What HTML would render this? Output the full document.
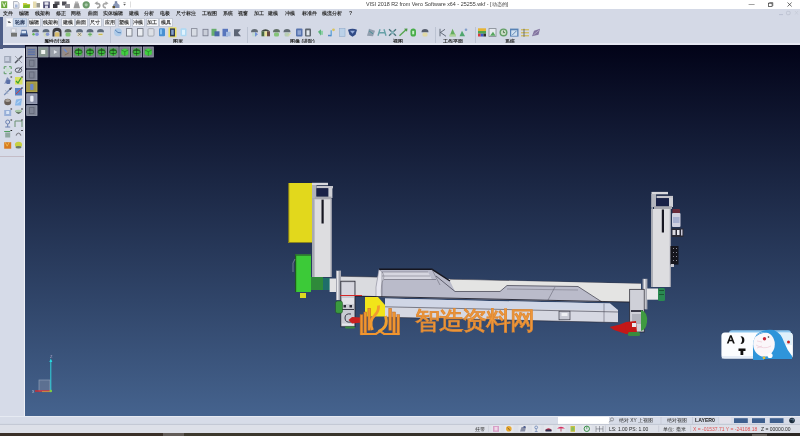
<!DOCTYPE html>
<html><head><meta charset="utf-8">
<style>
*{margin:0;padding:0;box-sizing:border-box}
html,body{width:800px;height:436px;overflow:hidden;background:#d4d9e6;font-family:"Liberation Sans",sans-serif}
.a{position:absolute}
#title{left:0;top:0;width:800px;height:9px;background:#fff}
#ttxt{left:0;top:1px;width:874px;text-align:center;font-size:5.4px;line-height:7px;color:#3a3a3a;white-space:nowrap}
#menu{left:0;top:9px;width:800px;height:8px;background:#d4d9e6}
.m{position:absolute;top:9.5px;font-size:5.2px;line-height:7px;color:#303030;font-weight:bold;white-space:nowrap}
.tab{position:absolute;top:17.8px;height:8.6px;background:#f6f7fa;border:0.5px solid #c4cad6;font-size:5px;line-height:7px;color:#3a3a3a;font-weight:bold;text-align:center;white-space:nowrap}
.gl{position:absolute;top:38px;font-size:5px;line-height:6px;color:#2a2a2a;font-weight:bold;white-space:nowrap}
.sep{position:absolute;top:27px;width:1px;height:17px;background:#bcc3d2}
#vp{left:25px;top:45px;width:775px;height:371px;background:linear-gradient(to bottom,#020318 0%,#45638e 100%)}
#lp{left:0;top:48.5px;width:25px;height:367.5px;background:#d6dbe8}
#st1{left:0;top:416px;width:800px;height:8.5px;background:#d7dce8;border-top:0.6px solid #e6eaf2}
#st2{left:0;top:424.5px;width:800px;height:8px;background:#dde0e8}
#bot{left:0;top:432.5px;width:800px;height:3.5px;background:linear-gradient(to right,#3a3028 0,#3a3028 163px,#625c58 163px,#625c58 184px,#3e3a2e 184px,#36322a 400px,#2c2824 800px)}
.s{position:absolute;font-size:5px;line-height:7px;white-space:nowrap;color:#222}
.ic{position:absolute;width:8px;height:8px}
.m,.tab,.gl,.s,#ttxt,#wm{will-change:transform}
</style></head><body>
<div id="title" class="a"></div>
<div id="ttxt" class="a">VISI 2018 R2 from Vero Software x64 - 25255.wkf - [动态的]</div>

<div id="menu" class="a"></div>
<div class="m" style="left:3px">文件</div>
<div class="m" style="left:19px">编辑</div>
<div class="m" style="left:35px">线架构</div>
<div class="m" style="left:55.5px">修正</div>
<div class="m" style="left:71px">网格</div>
<div class="m" style="left:87.5px">曲面</div>
<div class="m" style="left:102.5px">实体编辑</div>
<div class="m" style="left:129px">建模</div>
<div class="m" style="left:144px">分析</div>
<div class="m" style="left:160px">电极</div>
<div class="m" style="left:176px">尺寸标注</div>
<div class="m" style="left:202px">工程图</div>
<div class="m" style="left:223px">系统</div>
<div class="m" style="left:238px">视窗</div>
<div class="m" style="left:254px">加工</div>
<div class="m" style="left:268px">建模</div>
<div class="m" style="left:285px">冲模</div>
<div class="m" style="left:302px">标准件</div>
<div class="m" style="left:322px">模流分析</div>
<div class="m" style="left:349px">?</div>

<div class="tab" style="left:5.5px;width:6.5px;border-color:#e6e8ee"><div style="position:absolute;left:1.6px;top:3.2px;width:0;height:0;border-left:1.4px solid transparent;border-right:1.4px solid transparent;border-top:1.6px solid #111"></div></div>
<div class="tab" style="left:12.5px;width:13.5px;background:#cddbee;border-color:#b4c6de;color:#1e2e50">轮廓</div>
<div class="tab" style="left:27.5px;width:12.5px">编辑</div>
<div class="tab" style="left:42px;width:17px">线架构</div>
<div class="tab" style="left:60.5px;width:13.5px">建模</div>
<div class="tab" style="left:75px;width:12.5px">曲面</div>
<div class="tab" style="left:89px;width:12.5px">尺寸</div>
<div class="tab" style="left:102.5px;width:13px">应用</div>
<div class="tab" style="left:117.5px;width:12.5px">塑模</div>
<div class="tab" style="left:132px;width:12.5px">冲模</div>
<div class="tab" style="left:145.5px;width:12.5px">加工</div>
<div class="tab" style="left:159px;width:14px">模具</div>

<div class="gl" style="left:44px">属性/过滤器</div>
<div class="gl" style="left:172.5px">图形</div>
<div class="gl" style="left:290px">图像 (进阶)</div>
<div class="gl" style="left:393px">视图</div>
<div class="gl" style="left:443px">工作平面</div>
<div class="gl" style="left:505px">系统</div>
<div class="sep" style="left:110px"></div>
<div class="sep" style="left:247px"></div>
<div class="sep" style="left:435px"></div>
<div class="sep" style="left:475px"></div>


<svg class="a" style="left:0;top:0" width="800" height="48" viewBox="0 0 800 48">
<!-- quick access -->
<rect x="1.2" y="1.3" width="6" height="6.8" fill="#6aa83c"/>
<path d="M2.6 2.5 L4.2 6.8 L5.8 2.5" stroke="#e8f4d8" stroke-width="1" fill="none"/>
<path d="M13.5 1.5 H17.3 L19 3.2 V8.2 H13.5Z" fill="#eef0f6" stroke="#8a90a0" stroke-width="0.6"/>
<rect x="15" y="4.5" width="2.6" height="3" fill="#a8b8d8"/>
<path d="M23 3 H26.5 L27.5 4 H30 V8 H23Z" fill="#c8cc40"/>
<path d="M23.8 4.8 H30.3 L29 8 H23Z" fill="#7ab828"/>
<rect x="33" y="1.5" width="3.5" height="6.5" fill="#e6dcb0"/>
<rect x="36.5" y="3" width="3.5" height="4.5" fill="#9a9a90"/>
<rect x="43.2" y="1.6" width="6.6" height="6.6" fill="#4a4a72"/>
<rect x="44.5" y="2.2" width="4" height="2.6" fill="#e8e8f0"/>
<rect x="45" y="5.6" width="3" height="2.6" fill="#d8d8e8"/>
<rect x="54.5" y="1.5" width="5" height="3.5" fill="#5a5a60"/>
<rect x="53" y="4" width="4.5" height="4" fill="#3a3a40"/>
<rect x="62" y="1.5" width="4.5" height="4" fill="#505058"/>
<rect x="65" y="4" width="5" height="4" fill="#8a8a90"/>
<path d="M73.5 8.2 L74.8 3 H78.5 L80 8.2Z" fill="#9a9a9a"/>
<rect x="75" y="1.5" width="3.2" height="2" fill="#b8b8b8"/>
<circle cx="86.2" cy="4.8" r="3.6" fill="#6a9a6a"/>
<circle cx="86.2" cy="4.8" r="1.6" fill="#a8c8a8"/>
<path d="M96.5 3.2 Q99.8 3.2 99.8 5.6 Q99.8 7.8 97 7.8" stroke="#a0a0a0" stroke-width="1.5" fill="none"/>
<path d="M97.5 1.2 L94.5 3.2 L97.5 5.2Z" fill="#a0a0a0"/>
<path d="M106.5 3.2 Q103.2 3.2 103.2 5.6 Q103.2 7.8 106 7.8" stroke="#a8a8a8" stroke-width="1.5" fill="none"/>
<path d="M105.5 1.2 L108.5 3.2 L105.5 5.2Z" fill="#a8a8a8"/>
<path d="M113 5 L116 2 L119.5 5 V8 H113Z" fill="#8a98b8"/>
<rect x="114.8" y="1.2" width="2.4" height="2" fill="#7a88a8"/>
<rect x="112.5" y="6" width="2.5" height="2.2" fill="#5a5030"/>
<rect x="123.4" y="2.6" width="2.2" height="0.5" fill="#444"/>
<path d="M123.3 4.2 H125.8 L124.55 5.6Z" fill="#222"/>
<line x1="130.5" y1="1.5" x2="130.5" y2="7.5" stroke="#c8c8c8" stroke-width="0.6"/>
<!-- window controls -->
<line x1="748.6" y1="4.5" x2="754.6" y2="4.5" stroke="#444" stroke-width="0.5"/>
<rect x="768.5" y="3.2" width="3.6" height="3.4" fill="none" stroke="#333" stroke-width="0.7"/>
<path d="M769.3 2.6 H772.8 V6" stroke="#333" stroke-width="0.6" fill="none"/>
<path d="M787.5 2.5 L791.7 6.5 M791.7 2.5 L787.5 6.5" stroke="#333" stroke-width="0.7"/>
<!-- MDI controls -->
<line x1="779" y1="14.6" x2="783" y2="14.6" stroke="#a0a6bc" stroke-width="0.5"/>
<rect x="786.5" y="11.3" width="3.6" height="3.4" rx="1" fill="none" stroke="#b4b8c8" stroke-width="0.6"/>
<path d="M795 11 L798 14.5 M798 11 L795 14.5" stroke="#c0c4d2" stroke-width="0.5"/>
<!-- tab dropdown -->
<path d="M7.6 21.4 H10.2 L8.9 22.9Z" fill="#111"/>
</svg>
<div class="a" style="left:0;top:17px;width:3.4px;height:31.5px;background:#4e5e88"></div>
<div class="a" style="left:0;top:44.6px;width:25px;height:3.9px;background:#4e5b80"></div>
<svg class="a" style="left:0;top:0;filter:blur(0.3px);opacity:0.9" width="800" height="48" viewBox="0 0 800 48">
<rect x="10.5" y="28.3" width="6.5" height="5" fill="#c8ccd6"/><rect x="11" y="32.8" width="6" height="3.8" fill="#6a6a66"/><rect x="12" y="29.3" width="3" height="2.5" fill="#f0f0f4"/>
<path d="M20 36.3 L21.5 29.8 H26.5 L28 36.3Z" fill="#3a5a90"/><rect x="21.5" y="30.8" width="4.5" height="2.5" fill="#d8e4f4"/><rect x="20.2" y="34.8" width="7.6" height="1.5" fill="#2a3a68"/>
<path d="M32.0 32.300000000000004 A3.5 3.2 0 0 1 39.0 32.300000000000004Z" fill="#3a4a5c" opacity="0.85"/>
<rect x="33.0" y="32.6" width="5" height="3.8" rx="1.5" fill="#c8d8e0" opacity="0.7"/><circle cx="37" cy="34.3" r="1.8" fill="#7a8ad8"/><circle cx="33.5" cy="34.3" r="1.2" fill="#58b048"/>
<path d="M42.5 32.300000000000004 A3.5 3.2 0 0 1 49.5 32.300000000000004Z" fill="#3a4a5c" opacity="0.85"/>
<rect x="43.5" y="32.6" width="5" height="3.8" rx="1.5" fill="#d0dca0" opacity="0.7"/><circle cx="47.5" cy="34.3" r="1.8" fill="#8090d0"/>
<path d="M52.5 36.6 V31.8 Q52.5 27.8 57 27.8 Q61.5 27.8 61.5 31.8 V36.6 H59.5 V32.3 Q57 29.8 54.5 32.3 V36.6Z" fill="#2a2a30"/><rect x="54.8" y="32.3" width="4.5" height="4.3" fill="#d8b860"/>
<path d="M64.5 32.300000000000004 A3.5 3.2 0 0 1 71.5 32.300000000000004Z" fill="#3a4a3c" opacity="0.85"/>
<rect x="65.5" y="32.6" width="5" height="3.8" rx="1.5" fill="#58b838" opacity="0.7"/>
<path d="M76.0 32.300000000000004 A3.5 3.2 0 0 1 83.0 32.300000000000004Z" fill="#3a4a5c" opacity="0.85"/>
<rect x="77.0" y="32.6" width="5" height="3.8" rx="1.5" fill="#e8e0b0" opacity="0.7"/><path d="M78 32.8 L81 35.8 M81 32.8 L78 35.8" stroke="#444" stroke-width="0.6"/>
<path d="M86.5 32.300000000000004 A3.5 3.2 0 0 1 93.5 32.300000000000004Z" fill="#3a4a5c" opacity="0.85"/>
<rect x="87.5" y="32.6" width="5" height="3.8" rx="1.5" fill="#b8d8a8" opacity="0.7"/><path d="M90 32.3 V36.3 M88 34.3 H92" stroke="#40a040" stroke-width="0.8"/>
<path d="M97.0 32.300000000000004 A3.5 3.2 0 0 1 104.0 32.300000000000004Z" fill="#3a4a5c" opacity="0.85"/>
<rect x="98.0" y="32.6" width="5" height="3.8" rx="1.5" fill="#e6e4c8" opacity="0.7"/><rect x="98.5" y="33.8" width="4" height="1" fill="#c8b020"/>
<circle cx="118" cy="32.3" r="4" fill="#a8c8e8"/><path d="M115 29.8 Q118 33.8 121 32.8" stroke="#4a78b0" stroke-width="1" fill="none"/>
<rect x="126.5" y="28.6" width="5.5" height="7.5" fill="#eef0f4" stroke="#606470" stroke-width="0.8"/>
<rect x="137.5" y="28.6" width="5.5" height="7.5" fill="#eef0f4" stroke="#606470" stroke-width="0.8"/>
<rect x="148" y="28.6" width="6" height="7.5" rx="1" fill="#dde0e6" stroke="#8a8e98" stroke-width="0.7"/>
<rect x="159" y="28.3" width="6" height="8" rx="1" fill="#3a88d0"/><rect x="160" y="29.3" width="2" height="5" fill="#80c0f0"/>
<rect x="168.5" y="27.3" width="8" height="10" fill="#f0e050"/><rect x="170" y="28.400000000000002" width="5" height="8" fill="#1e2a40"/><rect x="171.2" y="29.8" width="2.5" height="5" fill="#7a98c8"/>
<rect x="180.5" y="28.3" width="6" height="8" rx="1" fill="#a8d8f4"/><rect x="182" y="29.8" width="3" height="5" fill="#e0f4ff"/>
<rect x="191.5" y="28.6" width="5.5" height="7.5" fill="#d8dce4" stroke="#7a7e8c" stroke-width="0.8"/>
<rect x="203" y="29.3" width="5" height="6.5" fill="#c8ccd8" stroke="#6a6e80" stroke-width="0.8"/>
<rect x="211.5" y="28.8" width="5" height="7" fill="#5aa860"/><rect x="214.5" y="31.3" width="5" height="5" fill="#3a5aa0"/>
<rect x="222.5" y="28.8" width="5.5" height="7.5" fill="#4a6ab8"/><rect x="226" y="31.8" width="4.5" height="4.5" fill="#a0b8e0"/>
<path d="M234 29.3 H241 L238 32.8 L241 36.3 H234Z" fill="#505868"/>
<path d="M251.0 32.300000000000004 A3.5 3.2 0 0 1 258.0 32.300000000000004Z" fill="#404a50" opacity="0.85"/>
<rect x="252.0" y="32.6" width="5" height="3.8" rx="1.5" fill="#b8d8c8" opacity="0.7"/><path d="M255 31.8 L258 34.3 L255 36.8 Z" fill="#6a8ad8"/>
<path d="M261 31.3 Q265.5 27.3 270 31.3Z" fill="#303830"/><rect x="261.5" y="31.3" width="3" height="5" fill="#3a5a30"/><rect x="264.5" y="31.3" width="2.5" height="5" fill="#e8e090"/><rect x="267" y="31.3" width="3" height="5" fill="#5a3a30"/>
<path d="M273.0 32.300000000000004 A3.5 3.2 0 0 1 280.0 32.300000000000004Z" fill="#405040" opacity="0.85"/>
<rect x="274.0" y="32.6" width="5" height="3.8" rx="1.5" fill="#58b838" opacity="0.7"/>
<path d="M283.5 32.300000000000004 A3.5 3.2 0 0 1 290.5 32.300000000000004Z" fill="#404a50" opacity="0.85"/>
<rect x="284.5" y="32.6" width="5" height="3.8" rx="1.5" fill="#a8c898" opacity="0.7"/><path d="M288 35.8 L291 32.8" stroke="#e0d890" stroke-width="1"/>
<rect x="296" y="28.6" width="6.5" height="7.8" rx="1" fill="#4a68a8"/><rect x="297.5" y="30.3" width="3.5" height="4.5" fill="#8aa0d0"/>
<rect x="305" y="28.6" width="6" height="7.8" rx="1" fill="#505860"/><rect x="306.5" y="30.3" width="3" height="5" fill="#e0e6ee"/>
<path d="M318 31.8 L321 29.3 V35.8 Z" fill="#50b070"/><rect x="321" y="30.8" width="2" height="4" fill="#88d0a0"/>
<rect x="330.5" y="30.3" width="1.4" height="6" fill="#58a0d8"/><rect x="328" y="34.8" width="3" height="1.5" fill="#4a80c0"/><circle cx="333.5" cy="29.8" r="1.4" fill="#d8c050"/>
<rect x="339.5" y="28.6" width="5.5" height="7.8" fill="#b8d0e8" stroke="#8aa8c8" stroke-width="0.6"/>
<path d="M348 29.8 Q352.5 27.8 357 29.8 L355.5 34.8 L352.5 36.8 L349.5 34.8Z" fill="#1e3a7a"/><path d="M350 30.8 H355 L352.5 33.8Z" fill="#90a8d8"/>
<path d="M367 35.8 L369 28.8 L375 30.8 L373 36.3Z" fill="#8a98a8"/><path d="M369 30.8 L373 33.8" stroke="#3a8890" stroke-width="1"/>
<path d="M378 35.8 L380 29.3 M384 29.3 L386 35.8 M379 32.8 H385" stroke="#5a9aa0" stroke-width="1.4"/>
<path d="M389 29.3 L396 35.8 M396 29.3 L389 35.8" stroke="#3a6a70" stroke-width="1.3"/><rect x="391" y="31.3" width="3" height="2.5" fill="#80b0b8"/>
<path d="M399.5 35.8 L406.5 29.3" stroke="#4aa040" stroke-width="1.4"/><path d="M404 28.8 L407.5 28.6 L407 31.8Z" fill="#3a9030"/>
<rect x="410.5" y="28.6" width="5.5" height="8" rx="2.7" fill="#38a838"/><rect x="412.2" y="30.8" width="2" height="3.5" fill="#c8f0c8"/>
<path d="M421.5 32.300000000000004 A3.5 3.2 0 0 1 428.5 32.300000000000004Z" fill="#303848" opacity="0.85"/>
<rect x="422.5" y="32.6" width="5" height="3.8" rx="1.5" fill="#e8d880" opacity="0.7"/>
<path d="M440 28.8 V36.3 M440 32.8 L445 29.3 M441 32.8 L446 36.3" stroke="#4a5260" stroke-width="0.9" fill="none"/>
<path d="M449.5 36.3 L452.5 28.8 L456 36.3Z" fill="#58a850"/><rect x="449.5" y="34.3" width="6.5" height="2" fill="#a8d090"/>
<path d="M459.5 36.3 L462 30.8 L465 36.3Z" fill="#40a060"/><circle cx="466" cy="29.8" r="1.3" fill="#7a98c8"/>
<rect x="478" y="28.3" width="8" height="2.7" fill="#e8b020"/><rect x="478" y="31.0" width="8" height="2.7" fill="#40a040"/><rect x="478" y="33.7" width="2.7" height="2.8" fill="#d82828"/><rect x="480.7" y="33.7" width="2.7" height="2.8" fill="#2848c8"/><rect x="483.4" y="33.7" width="2.6" height="2.8" fill="#202020"/>
<rect x="489" y="28.6" width="7" height="7.8" fill="#e8ecf0" stroke="#7a8088" stroke-width="0.8"/><path d="M490 35.8 L493 31.8 L495.5 35.8Z" fill="#4aa050"/>
<circle cx="503.5" cy="32.4" r="4" fill="#58985a"/><circle cx="503.5" cy="32.4" r="2.6" fill="#c8dcc0"/><path d="M503.5 30.6 V32.6 H505" stroke="#305a30" stroke-width="0.8" fill="none"/>
<rect x="510" y="28.6" width="8.5" height="8" fill="#4a78b0"/><rect x="511.2" y="30.3" width="6" height="5.5" fill="#d0e0f0"/><path d="M512 35.3 L516.5 30.8" stroke="#3a68a0" stroke-width="0.8"/>
<path d="M521 29.8 H529 M521 32.8 H529 M521 35.8 H529" stroke="#d0b020" stroke-width="1"/><path d="M524 28.8 V36.8" stroke="#404850" stroke-width="0.8"/>
<path d="M532 36.3 L534 30.8 L540 28.8 L538.5 34.8Z" fill="#7a6a98"/><path d="M533.5 34.8 L539 30.3" stroke="#c8c0d8" stroke-width="0.6"/>
</svg>
<div class="a" style="left:3.4px;top:43.3px;width:797px;height:1.5px;background:#e6e8f2"></div>
<div id="vp" class="a"></div>
<div id="lp" class="a"></div><div class="a" style="left:0;top:155.5px;width:24.5px;height:0.7px;background:#c4bcc6"></div><div class="a" style="left:24.2px;top:48.5px;width:0.8px;height:367.5px;background:#eef0f6"></div>

<svg class="a" style="left:0;top:0;filter:blur(0.3px)" width="800" height="160" viewBox="0 0 800 160">
<rect x="26.4" y="47" width="10" height="10" fill="#7e8494" stroke="#9ea4b4" stroke-width="0.8"/>
<rect x="27.9" y="49" width="7" height="1.2" fill="#5a70a8"/><rect x="27.9" y="51.4" width="7" height="1.2" fill="#5a70a8"/><rect x="27.9" y="53.8" width="7" height="1.2" fill="#5a70a8"/>
<rect x="38.2" y="47" width="10" height="10" fill="#7e8494" stroke="#9ea4b4" stroke-width="0.8"/>
<rect x="38.7" y="47.5" width="9" height="9" fill="#889890"/><rect x="41.2" y="50" width="4" height="4" fill="#f0f4f0"/>
<rect x="49.9" y="47" width="10" height="10" fill="#7e8494" stroke="#9ea4b4" stroke-width="0.8"/>
<rect x="50.4" y="47.5" width="9" height="9" fill="#9aa0aa"/><path d="M53.9 50 L57.4 52 L53.9 54Z" fill="#e0e4ea"/>
<rect x="61.8" y="47" width="10" height="10" fill="#7e8494" stroke="#9ea4b4" stroke-width="0.8"/>
<rect x="62.3" y="47.5" width="9" height="9" fill="#968c88"/><path d="M63.8 49 L66.8 52" stroke="#6a8ad0" stroke-width="1.5"/><path d="M64.8 55 L68.8 53" stroke="#7a6a60" stroke-width="1"/>
<rect x="73.5" y="47" width="10" height="10" fill="#7e8494" stroke="#9ea4b4" stroke-width="0.8"/>
<rect x="74.1" y="47.6" width="8.8" height="8.8" fill="#7a7e8a"/><circle cx="78.5" cy="52" r="3.8" fill="#3cc43c"/><ellipse cx="78.5" cy="52" rx="3.8" ry="1.6" fill="none" stroke="#1a2a1a" stroke-width="0.6"/><path d="M78.5 48.2 V55.8" stroke="#1a2a1a" stroke-width="0.6"/><path d="M75.0 50.5 Q78.5 48 82.0 50.5" stroke="#1a2a1a" stroke-width="0.6" fill="none"/>
<rect x="85" y="47" width="10" height="10" fill="#7e8494" stroke="#9ea4b4" stroke-width="0.8"/>
<rect x="85.6" y="47.6" width="8.8" height="8.8" fill="#7a7e8a"/><circle cx="90" cy="52" r="3.8" fill="#3cc43c"/><ellipse cx="90" cy="52" rx="3.8" ry="1.6" fill="none" stroke="#1a2a1a" stroke-width="0.6"/><path d="M90 48.2 V55.8" stroke="#1a2a1a" stroke-width="0.6"/><path d="M86.5 50.5 Q90 48 93.5 50.5" stroke="#1a2a1a" stroke-width="0.6" fill="none"/>
<rect x="96.6" y="47" width="10" height="10" fill="#7e8494" stroke="#9ea4b4" stroke-width="0.8"/>
<rect x="97.19999999999999" y="47.6" width="8.8" height="8.8" fill="#7a7e8a"/><circle cx="101.6" cy="52" r="3.8" fill="#3cc43c"/><ellipse cx="101.6" cy="52" rx="3.8" ry="1.6" fill="none" stroke="#1a2a1a" stroke-width="0.6"/><path d="M101.6 48.2 V55.8" stroke="#1a2a1a" stroke-width="0.6"/><path d="M98.1 50.5 Q101.6 48 105.1 50.5" stroke="#1a2a1a" stroke-width="0.6" fill="none"/>
<rect x="108.2" y="47" width="10" height="10" fill="#7e8494" stroke="#9ea4b4" stroke-width="0.8"/>
<rect x="108.8" y="47.6" width="8.8" height="8.8" fill="#7a7e8a"/><circle cx="113.2" cy="52" r="3.8" fill="#3cc43c"/><ellipse cx="113.2" cy="52" rx="3.8" ry="1.6" fill="none" stroke="#1a2a1a" stroke-width="0.6"/><path d="M113.2 48.2 V55.8" stroke="#1a2a1a" stroke-width="0.6"/><path d="M109.7 50.5 Q113.2 48 116.7 50.5" stroke="#1a2a1a" stroke-width="0.6" fill="none"/>
<rect x="119.8" y="47" width="10" height="10" fill="#7e8494" stroke="#9ea4b4" stroke-width="0.8"/>
<rect x="120.39999999999999" y="47.6" width="8.8" height="8.8" fill="#7a7e8a"/><path d="M121.3 50 L124.8 48.3 L128.3 50 V54.3 L124.8 56 L121.3 54.3Z" fill="#40d040"/><path d="M121.3 50 L124.8 51.7 L128.3 50 M124.8 51.7 V56" stroke="#1e5a1e" stroke-width="0.5" fill="none"/>
<rect x="131.6" y="47" width="10" height="10" fill="#7e8494" stroke="#9ea4b4" stroke-width="0.8"/>
<rect x="132.2" y="47.6" width="8.8" height="8.8" fill="#7a7e8a"/><circle cx="136.6" cy="52" r="3.8" fill="#3cc43c"/><ellipse cx="136.6" cy="52" rx="3.8" ry="1.6" fill="none" stroke="#1a2a1a" stroke-width="0.6"/><path d="M136.6 48.2 V55.8" stroke="#1a2a1a" stroke-width="0.6"/><path d="M133.1 50.5 Q136.6 48 140.1 50.5" stroke="#1a2a1a" stroke-width="0.6" fill="none"/>
<rect x="143.3" y="47" width="10" height="10" fill="#7e8494" stroke="#9ea4b4" stroke-width="0.8"/>
<rect x="143.9" y="47.6" width="8.8" height="8.8" fill="#7a7e8a"/><path d="M144.8 50 L148.3 48.3 L151.8 50 V54.3 L148.3 56 L144.8 54.3Z" fill="#40d040"/><path d="M144.8 50 L148.3 51.7 L151.8 50 M148.3 51.7 V56" stroke="#1e5a1e" stroke-width="0.5" fill="none"/>
<rect x="26.7" y="58.2" width="10.3" height="9.8" fill="#7e8494" stroke="#9ea4b4" stroke-width="0.8"/><rect x="29.7" y="60.2" width="4.3" height="6" fill="none" stroke="#5a6070" stroke-width="0.6"/>
<rect x="26.7" y="70" width="10.3" height="9.8" fill="#7e8494" stroke="#9ea4b4" stroke-width="0.8"/><rect x="29.7" y="72" width="4.3" height="6" fill="none" stroke="#5a6070" stroke-width="0.6"/>
<rect x="26.7" y="81.9" width="10.3" height="9.8" fill="#a0984a" stroke="#c8b850" stroke-width="0.8"/><rect x="30.2" y="83.9" width="3.3" height="6" rx="1" fill="#6a88d0"/>
<rect x="26.7" y="93.8" width="10.3" height="9.8" fill="#8a90a8" stroke="#a4aac0" stroke-width="0.8"/><rect x="30.2" y="95.8" width="3.3" height="6" rx="1" fill="#e8ecf4"/>
<rect x="26.7" y="105.7" width="10.3" height="9.8" fill="#7e8494" stroke="#9ea4b4" stroke-width="0.8"/><rect x="29.7" y="107.7" width="4.3" height="6" fill="none" stroke="#5a6070" stroke-width="0.6"/>
<rect x="4.2" y="56" width="7" height="7" fill="#a0a8b8"/><rect x="5.2" y="57" width="4" height="4" fill="#c8cede"/>
<path d="M15 63 L22 56" stroke="#50545e" stroke-width="1.4"/><path d="M15 56 L22 63" stroke="#8a8e98" stroke-width="0.8"/>
<path d="M4.2 69 V66.7 H6.5 M9 66.7 H11.2 V69 M11.2 71.5 V73.7 H9 M6.5 73.7 H4.2 V71.5" stroke="#5a9a60" stroke-width="1" fill="none"/><rect x="5.7" y="68.2" width="4" height="4" fill="#c8e0d0"/>
<ellipse cx="18.5" cy="70.2" rx="3.3" ry="2.3" fill="none" stroke="#5a5e68" stroke-width="1"/><path d="M18 71.7 L22 66.7" stroke="#404450" stroke-width="1"/>
<path d="M4.2 84 L7.2 77 L11.2 81" fill="#8090b8"/><rect x="6.2" y="80" width="4" height="4" rx="1" fill="#5a70a8"/>
<rect x="15" y="77" width="7.5" height="7.5" fill="#d8e060"/><path d="M16 81 L18 83 L21 78" stroke="#38a030" stroke-width="1.2" fill="none"/>
<path d="M4.2 95 L10.2 89" stroke="#7a90b8" stroke-width="1.2"/><circle cx="10.2" cy="89" r="1" fill="#404040"/><path d="M5.2 90 L8.2 94" stroke="#a8b0c0" stroke-width="0.8"/>
<rect x="15" y="88" width="7" height="7.5" fill="#5a80c0"/><path d="M16 94 L21 89" stroke="#d04040" stroke-width="1"/>
<ellipse cx="7.7" cy="102.0" rx="3.5" ry="3.2" fill="#6a6058"/><ellipse cx="7.7" cy="100.5" rx="2.5" ry="1.5" fill="#a8a098"/>
<path d="M15 105.5 L16 99.5 L22 98.5 L21 105.5Z" fill="#8ab8e8"/><path d="M17 103.5 L20 100.5" stroke="#e0f0ff" stroke-width="0.8"/>
<rect x="4.2" y="110" width="7" height="6" fill="#98b0d8"/><rect x="6.2" y="111" width="3" height="3" fill="#d8e4f4"/>
<path d="M15 111 Q18.5 117 22 111Z" fill="#5a6a5a"/><ellipse cx="18.5" cy="111" rx="3.5" ry="1.2" fill="#a8c8a8"/>
<circle cx="7.7" cy="122" r="2" fill="none" stroke="#6a80b0" stroke-width="1"/><path d="M7.7 124 V127 M5.2 127 H10.2" stroke="#6a80b0" stroke-width="1"/>
<path d="M15 127 V121 H22 V127" stroke="#6a9070" stroke-width="1" fill="none"/>
<rect x="5.2" y="132.5" width="5" height="5" fill="#90a8a0"/><path d="M4.2 131.5 H10.2" stroke="#50a060" stroke-width="1"/>
<path d="M16 135.5 Q18.5 130.5 21 135.5" stroke="#7a7a82" stroke-width="1.2" fill="none"/>
<rect x="4.2" y="142.2" width="7" height="6.5" fill="#d87a20"/><path d="M5.2 142.2 L7.2 146.2 L9.2 142.2" stroke="#f0c050" stroke-width="0.8" fill="none"/>
<ellipse cx="18.5" cy="144.7" rx="3.6" ry="3" fill="#c8d040"/><ellipse cx="18.5" cy="147.2" rx="3" ry="1.3" fill="#6a7a6a"/>
<rect x="10.5" y="76.5" width="1.6" height="1" fill="#222"/>
<rect x="21.2" y="76.5" width="1.6" height="1" fill="#222"/>
<rect x="10.5" y="87.5" width="1.6" height="1" fill="#222"/>
<rect x="21.2" y="87.5" width="1.6" height="1" fill="#222"/>
<rect x="10.5" y="108.5" width="1.6" height="1" fill="#222"/>
<rect x="21.2" y="108.5" width="1.6" height="1" fill="#222"/>
<rect x="10.5" y="119.5" width="1.6" height="1" fill="#222"/>
<rect x="21.2" y="119.5" width="1.6" height="1" fill="#222"/>
<rect x="10.5" y="130.0" width="1.6" height="1" fill="#222"/>
<rect x="21.2" y="130.0" width="1.6" height="1" fill="#222"/>
</svg>
<svg class="a" style="left:0;top:0" width="800" height="436" viewBox="0 0 800 436">
<!-- LEFT ASSEMBLY -->
<rect x="288" y="183" width="25" height="60" fill="#e2d81c"/>
<rect x="288" y="183" width="1.2" height="60" fill="#7a7420"/>
<rect x="288" y="242" width="25" height="1" fill="#8a8420"/>
<rect x="312" y="185" width="3" height="92" fill="#a8aab2"/>
<rect x="314.6" y="199" width="17" height="78" fill="#dddde0"/>
<rect x="330.6" y="199" width="1" height="78" fill="#9a9ca8"/>
<rect x="321.5" y="199.5" width="2.2" height="24" fill="#161620"/>
<rect x="312" y="182.8" width="16" height="2.4" fill="#d8d8dc"/>
<rect x="316.5" y="186" width="16.5" height="2.3" fill="#c6c6cc"/>
<rect x="312" y="185" width="4.5" height="13" fill="#b0b2ba"/>
<rect x="316.5" y="188.3" width="12" height="8.3" fill="#1a2248"/>
<rect x="328.4" y="188" width="4" height="10" fill="#cfd0d6"/>
<rect x="315" y="196.6" width="16.6" height="2.7" fill="#a8a8b0"/>
<rect x="295" y="254.5" width="16" height="37.5" fill="#3cca38"/>
<rect x="295" y="254.5" width="1.2" height="37.5" fill="#1e5a1e"/>
<rect x="295" y="254.5" width="16" height="1.2" fill="#2a6a2a"/>
<path d="M295 259 L293 263 V272" stroke="#a0a8b0" stroke-width="0.6" fill="none"/>
<rect x="300" y="293" width="6" height="5" fill="#dcd820"/>
<rect x="311" y="277" width="12" height="13" fill="#2f8a3a"/>
<rect x="323" y="278" width="7" height="12" fill="#1f6e6a"/>
<rect x="329.6" y="278.5" width="7" height="13.5" fill="#e2e2e4"/>
<rect x="336" y="270.6" width="5" height="29.5" fill="#a6a8b2"/>
<rect x="337" y="271" width="1.5" height="29" fill="#e8e8ec"/>
<!-- UPPER BEAM -->
<polygon points="341,276.3 641,283.7 641,302 341,295.5" fill="#dadbdf"/>
<line x1="341" y1="276.3" x2="378" y2="277" stroke="#3a3a46" stroke-width="0.6"/>
<line x1="450" y1="279.4" x2="641" y2="283.7" stroke="#3a3a46" stroke-width="0.7"/>
<polygon points="440,279.4 641,283.7 641,302 602,302 578,286.5 507,285.5 500,291.5 455,291.5" fill="#e4e4e3"/>
<polygon points="376,297 376,287 379,269 432,269 450,281 455,291.5 500,291.5 507,285.5 578,286.5 602,302" fill="#babbca"/>
<polygon points="382,272 428,272 432,279.5 382,279.5" fill="#d6d6e0"/>
<path d="M379 270 Q385 272 384 278 Q381 283 382 297 H376 V287 Z" fill="#e6e6ee"/>
<path d="M379.5 270 Q385 273 383.5 279 Q380.5 284 381.5 297" stroke="#6a6a78" stroke-width="0.5" fill="none"/>
<polyline points="379,269.3 432,269.3 450,281" stroke="#15151e" stroke-width="1.4" fill="none"/>
<polyline points="376,297 376,287 379,269.5" stroke="#8a8a98" stroke-width="0.6" fill="none"/>
<polyline points="436,276 455,291.5 500,291.5 507,285.5 578,286.5 602,302" stroke="#3a3a48" stroke-width="0.7" fill="none"/>
<line x1="382" y1="272" x2="428" y2="272" stroke="#6a6a78" stroke-width="0.5"/>
<line x1="382" y1="276" x2="430" y2="276" stroke="#6a6a78" stroke-width="0.5"/>
<line x1="384" y1="279.5" x2="436" y2="279.5" stroke="#5a5a68" stroke-width="0.6"/>
<line x1="382" y1="272" x2="382" y2="297" stroke="#5a5a68" stroke-width="0.5"/>
<line x1="432" y1="269.5" x2="440" y2="285" stroke="#5a5a68" stroke-width="0.5"/>
<line x1="507" y1="289" x2="578" y2="290" stroke="#8a8a98" stroke-width="0.8"/>
<line x1="555" y1="287" x2="548" y2="300" stroke="#5a5a68" stroke-width="0.5"/>
<line x1="341" y1="295.8" x2="641" y2="302.3" stroke="#1e1e2a" stroke-width="0.9"/>

<!-- LOWER BEAM -->
<polygon points="385,298.6 610,303.6 618,310 618,322.6 385,317.2" fill="#d6d8e2"/>
<polygon points="385,298.6 610,303.6 617,310 385,306.8" fill="#d0d6e6"/>
<line x1="385" y1="306.8" x2="618" y2="312" stroke="#3a3a48" stroke-width="0.6"/>
<line x1="385" y1="317.2" x2="618" y2="322.6" stroke="#2a2a36" stroke-width="0.6"/>
<line x1="604" y1="303.5" x2="604" y2="322" stroke="#4a4a58" stroke-width="0.5"/>
<rect x="559" y="311.2" width="11" height="8.6" fill="#c8cad4" stroke="#2a2a36" stroke-width="0.6"/>
<rect x="561.5" y="313" width="6" height="3" fill="#eef0f4"/>
<!-- LEFT BRACKET -->
<rect x="340.8" y="281.2" width="14.2" height="45.6" fill="#c9cad2" stroke="#1e1e28" stroke-width="0.8"/>
<rect x="342" y="283" width="12" height="12" fill="#d6d6de"/>
<rect x="342" y="298" width="12" height="6" fill="#e2e2e8"/>
<rect x="343.5" y="305" width="2.5" height="2.5" fill="#2a2a36"/>
<rect x="349.5" y="305" width="2.5" height="2.5" fill="#2a2a36"/>
<rect x="342" y="309" width="12" height="1" fill="#3a3a48"/>
<path d="M351 314 Q345 313 345 318 Q345 323 351 322" stroke="#3a3a48" stroke-width="1" fill="none"/>
<rect x="342" y="323.5" width="12" height="2" fill="#e6e6ec"/>
<line x1="340" y1="295.5" x2="362" y2="295.5" stroke="#d42828" stroke-width="1"/>
<rect x="335.5" y="301" width="7" height="12.3" rx="2" fill="#3a9a3e" stroke="#1e4a20" stroke-width="0.5"/>
<polygon points="348.5,320 352,317 362,317.5 362,322.5 352,323.5" fill="#c82020"/>
<rect x="345" y="326.5" width="10" height="2" rx="1" fill="#3a8a3e"/>
<polygon points="365,297 378,297 385,305 385,316.5 365,316.5" fill="#f2e41a"/>
<!-- RIGHT ASSEMBLY -->
<rect x="651.3" y="209" width="19.4" height="78" fill="#dddde0"/>
<rect x="651.3" y="194" width="1.6" height="93" fill="#a8aab2"/>
<rect x="669.8" y="209" width="1" height="78" fill="#9a9ca8"/>
<rect x="661.8" y="209.5" width="2.2" height="23" fill="#161620"/>
<rect x="651.5" y="191.9" width="16.5" height="2.4" fill="#d8d8dc"/>
<rect x="656.6" y="195.9" width="16.4" height="2.3" fill="#c6c6cc"/>
<rect x="651.5" y="194" width="4.6" height="13" fill="#b4b6be"/>
<rect x="656" y="198.2" width="13" height="8.2" fill="#1a2248"/>
<rect x="669" y="198" width="4" height="9" fill="#cfd0d6"/>
<rect x="654" y="206.2" width="18" height="2.8" fill="#a8a8b0"/>
<rect x="672.5" y="209" width="7.5" height="4.5" rx="1" fill="#6a2a3a"/>
<rect x="672" y="213" width="8.5" height="14" rx="1" fill="#d0d0e0"/>
<rect x="673" y="217" width="6.5" height="6" fill="#a8b0d0"/>
<rect x="671.5" y="228.5" width="12" height="8.5" fill="#2a2a36"/>
<rect x="672.5" y="230" width="3" height="5" fill="#d8d8e0"/>
<rect x="677" y="230" width="2.5" height="5" fill="#e8e8f0"/>
<rect x="681" y="229.5" width="1.5" height="6" fill="#c8c8d8"/>
<rect x="670.5" y="246" width="8" height="18.6" fill="#15151c"/>
<g fill="#8a8a98"><rect x="673" y="248" width="1" height="1"/><rect x="676" y="248" width="1" height="1"/><rect x="673" y="252" width="1" height="1"/><rect x="676" y="252" width="1" height="1"/><rect x="673" y="256" width="1" height="1"/><rect x="676" y="256" width="1" height="1"/><rect x="673" y="260" width="1" height="1"/><rect x="676" y="260" width="1" height="1"/></g>
<rect x="671" y="264" width="3" height="3" fill="#c8c8d0"/>
<rect x="642.6" y="278.8" width="4.8" height="30.6" fill="#a8aab4"/>
<rect x="644" y="279" width="1.4" height="30" fill="#e8e8ec"/>
<rect x="647" y="288.5" width="11" height="11.2" fill="#e8e8ea"/>
<rect x="658" y="288" width="7" height="13" rx="1.5" fill="#2a8a52"/><rect x="659" y="290" width="5" height="1" fill="#1a5a32"/><rect x="659" y="294" width="5" height="1" fill="#1a5a32"/>
<rect x="629.7" y="289.3" width="14.5" height="42.7" fill="#cfd0d8" stroke="#1e1e28" stroke-width="0.7"/>
<rect x="631" y="310" width="12" height="2" fill="#3a3a48"/>
<rect x="632" y="314" width="9" height="10" fill="#b0b2bc"/>
<path d="M641 310 Q648 312 647 322 Q646 330 641 331Z" fill="#3f9a40"/>
<polygon points="609.6,327 620,324.5 626,322 636,321 637,333 626,334 614,330" fill="#c41818"/><circle cx="630" cy="327" r="5" fill="#c41818"/><rect x="632" y="323" width="4" height="4" fill="#e8e8ee"/>
<rect x="628" y="332" width="12" height="4" rx="1.5" fill="#3a8a3e"/>

</svg>


<div id="st1" class="a"></div>
<div id="st2" class="a"></div>
<div id="bot" class="a"></div><div class="a" style="left:752px;top:433.5px;width:15px;height:2.5px;background:#8a8680;opacity:0.6"></div>
<div class="a" style="left:558px;top:416.5px;width:50.5px;height:7.8px;background:#fff"></div>
<svg class="a" style="left:0;top:410px" width="800" height="26" viewBox="0 410 800 26">
<circle cx="612" cy="419.4" r="1.6" fill="none" stroke="#555" stroke-width="0.5"/>
<path d="M610.8 420.6 L609.2 422.3" stroke="#555" stroke-width="0.6"/>
<line x1="661" y1="417" x2="661" y2="424" stroke="#b8bcc8" stroke-width="0.5"/>
<line x1="692.5" y1="417" x2="692.5" y2="424" stroke="#b8bcc8" stroke-width="0.5"/>
<line x1="718.5" y1="417" x2="718.5" y2="424" stroke="#c8ccd6" stroke-width="0.5"/>
<rect x="719.6" y="417" width="11.4" height="6.5" fill="#e2e0ea"/>
<rect x="734" y="418.2" width="13.8" height="4.8" fill="#3e5f8e"/>
<rect x="752" y="418.2" width="13" height="4.8" fill="#3e5f8e"/>
<rect x="769.8" y="418.2" width="13.7" height="4.8" fill="#3e5f8e"/>
<circle cx="792" cy="420.5" r="2.8" fill="#1a2a3a"/>
<path d="M790.5 419.5 L793.5 419 L793 421.5" stroke="#8ab0d0" stroke-width="0.5" fill="none"/>
<line x1="0" y1="424.4" x2="800" y2="424.4" stroke="#b4b8c4" stroke-width="0.6"/>
<line x1="658.7" y1="425.5" x2="658.7" y2="432" stroke="#b8bcc8" stroke-width="0.5"/>
<line x1="690.6" y1="425.5" x2="690.6" y2="432" stroke="#b8bcc8" stroke-width="0.5"/>
<line x1="605.5" y1="425.5" x2="605.5" y2="432" stroke="#b8bcc8" stroke-width="0.5"/>
<line x1="488.5" y1="425.5" x2="488.5" y2="432" stroke="#c4c8d2" stroke-width="0.5"/>
<!-- status icons -->
<rect x="491.5" y="425.3" width="9" height="7" fill="#e4e6ec"/>
<rect x="493" y="426" width="6" height="5.8" fill="#d8a0c8"/><rect x="494.5" y="427" width="3" height="3.5" fill="#f0d8e8"/>
<rect x="504.5" y="425.3" width="9" height="7" fill="#e4e6ec"/>
<circle cx="508.8" cy="428.8" r="2.8" fill="#e8a830"/><path d="M507.5 427.5 L510 430.5" stroke="#6a4a20" stroke-width="0.7"/>
<rect x="518.5" y="425.3" width="9" height="7" fill="#e4e6ec"/>
<path d="M520 431.5 L521.5 427 H526 L525 431.5Z" fill="#8a90a8"/><rect x="523.5" y="426" width="2" height="2" fill="#506090"/>
<rect x="532" y="425.3" width="8.5" height="7" fill="#e4e6ec"/>
<circle cx="536.2" cy="427.4" r="1.4" fill="none" stroke="#5a78b0" stroke-width="0.7"/><path d="M536.2 428.8 V431.5 M534.8 431.5 H537.6" stroke="#5a78b0" stroke-width="0.6"/>
<rect x="544" y="425.3" width="9" height="7" fill="#e4e6ec"/>
<path d="M545 430.5 Q548.5 426 552 430.5Z" fill="#c02848"/><rect x="545.5" y="429.5" width="6" height="2" fill="#303050"/>
<rect x="556.5" y="425.3" width="9" height="7" fill="#e4e6ec"/>
<path d="M557 428.5 Q561 425 565 428.5Z" fill="#d83060"/><path d="M561 428.5 V431.5" stroke="#a02040" stroke-width="0.7"/>
<rect x="569.5" y="425.3" width="6.5" height="7" fill="#e4e6ec"/>
<rect x="570.5" y="426" width="4.5" height="5.8" fill="#c8c040"/><rect x="571.3" y="427.2" width="2.8" height="3.5" fill="#88c060"/>
<rect x="582" y="425.3" width="9.5" height="7" fill="#e4e6ec"/>
<circle cx="586.8" cy="428.8" r="2.7" fill="none" stroke="#2a8a3a" stroke-width="0.9"/><path d="M586.8 426.2 V429.2" stroke="#2a8a3a" stroke-width="0.7"/>
<rect x="595" y="425.3" width="9" height="7" fill="#e4e6ec"/>
<path d="M596 426 V432 M599.5 426 V432 M603 426 V432 M596 428.9 H603" stroke="#505560" stroke-width="0.5" fill="none"/>
</svg>
<div class="s" style="left:618.8px;top:417px;font-size:4.8px;line-height:7px;color:#2a2a2a">绝对 XY 上视图</div>
<div class="s" style="left:667px;top:417px;font-size:4.8px;line-height:7px;color:#2a2a2a">绝对视图</div>
<div class="s" style="left:694.8px;top:417.3px;font-size:5.2px;line-height:7px;font-weight:bold;color:#1a1a1a">LAYER0</div>
<div class="s" style="left:474.5px;top:425.5px;font-size:4.8px;line-height:7px;color:#2a2a2a">挂带</div>
<div class="s" style="left:609.4px;top:425.5px;font-size:5px;line-height:7px;color:#2a2a2a">LS: 1.00 PS: 1.00</div>
<div class="s" style="left:662.5px;top:425.5px;font-size:4.8px;line-height:7px;color:#2a2a2a">单位: 毫米</div>
<div class="s" style="left:693px;top:425.5px;font-size:5px;line-height:7px;color:#e05252">X = -01537.71 Y = -24108.18</div>
<div class="s" style="left:760.8px;top:425.5px;font-size:5px;line-height:7px;color:#2a2a2a">Z = 00000.00</div>


<div class="a" id="wm" style="left:415px;top:304px;font-size:25px;line-height:32px;color:#f29a3a;white-space:nowrap;font-weight:normal;-webkit-text-stroke:0.9px #e08a34;letter-spacing:-1.3px;font-family:'Liberation Sans',sans-serif">智造资料网</div>
<svg class="a" style="left:0;top:0" width="800" height="436" viewBox="0 0 800 436">
<g fill="#f0952f" stroke="#b8682a" stroke-width="0.5">
<rect x="360.1" y="314.7" width="2.8" height="20.2"/>
<rect x="363.9" y="312" width="2.8" height="21"/>
<rect x="367.9" y="308.3" width="2.8" height="22"/>
<rect x="388.8" y="308.3" width="2.8" height="22"/>
<rect x="392.7" y="312" width="2.8" height="21"/>
<rect x="396.9" y="314.7" width="2.8" height="20.2"/>
</g>
<path d="M360.5 334 H376 L380 331 L384 334 H399.5" stroke="#f0952f" stroke-width="2.2" fill="none"/>
<path d="M372.5 330 Q368.5 321 375 315 Q379 311 378.5 305.5" stroke="#f29a30" stroke-width="2.8" fill="none"/>
<path d="M385.5 316 Q389 327 378.5 331.5" stroke="#f0a030" stroke-width="2.8" fill="none"/>
</svg>

<svg class="a" style="left:0;top:0" width="800" height="436" viewBox="0 0 800 436">
<!-- axis triad -->
<rect x="39" y="380" width="11" height="11" fill="#6a7a98" stroke="#b0bccc" stroke-width="0.7" opacity="0.7"/>
<line x1="50.8" y1="360" x2="50.8" y2="391" stroke="#30d4dc" stroke-width="1"/>
<polygon points="49.3,362 52.3,362 50.8,358.5" fill="#28d8e0"/>
<line x1="35" y1="391" x2="50.8" y2="391" stroke="#e02828" stroke-width="1.3"/>
<line x1="42" y1="391.6" x2="50.8" y2="391.6" stroke="#d8c040" stroke-width="0.6"/>
<circle cx="50.8" cy="391" r="1.3" fill="#80d040"/>
<text x="50" y="357.5" font-size="4" fill="#b0a8c8" font-family="Liberation Sans">Z</text>
<text x="32" y="393" font-size="3.5" fill="#c0c8d8" font-family="Liberation Sans">X</text>
<!-- sticker -->
<rect x="729" y="330.3" width="62" height="6" rx="3" fill="#8cc6ee"/>
<rect x="721.4" y="332.4" width="71.5" height="26" rx="3.5" fill="#fbfdff"/>
<rect x="721.8" y="356" width="70" height="2.5" fill="#e6eef8"/>
<path d="M726.8 343.5 L730 335.2 H731.6 L734.8 343.5 H733 L732.2 341.3 H729.4 L728.6 343.5Z M729.9 339.8 H731.7 L730.8 337.2Z" fill="#111"/>
<path d="M740.5 336.2 A3.9 3.9 0 0 1 740.5 344 A5.5 5.5 0 0 0 740.5 336.2Z" fill="#111"/>
<path d="M738.5 348.5 H745.5 V351 H743.3 V355 H740.5 V351 H738.5Z" fill="#111"/>
<rect x="777" y="333" width="15" height="12" fill="#dff0fa"/>
<path d="M757 334 Q764 328.5 774 330 Q781 333 784 342 Q787 350 792 356 V359 H753 V350 Q752 340 757 334Z" fill="#2f95da"/>
<ellipse cx="764" cy="344.3" rx="10.8" ry="12.3" fill="#fbf7fa"/>
<path d="M756 336 Q763 330.5 771 333" stroke="#2f95da" stroke-width="0.8" fill="none"/>
<path d="M754 352 Q757 358 764 358 L764 360 H753Z" fill="#2f95da"/>
<circle cx="764.5" cy="338.8" r="1.7" fill="#c8283a"/>
<circle cx="768.5" cy="337" r="0.8" fill="#333"/>
<path d="M756 345 Q764 350 771 346 M757 341 L762 342 M757 348 L762 346" stroke="#e8b8c8" stroke-width="0.5" fill="none"/>
<circle cx="770" cy="355.5" r="2.6" fill="#fff"/>
<circle cx="764" cy="357.8" r="1.4" fill="#e8c030"/>
<circle cx="788.5" cy="342" r="1.5" fill="#c82020"/>
</svg>
</body></html>
